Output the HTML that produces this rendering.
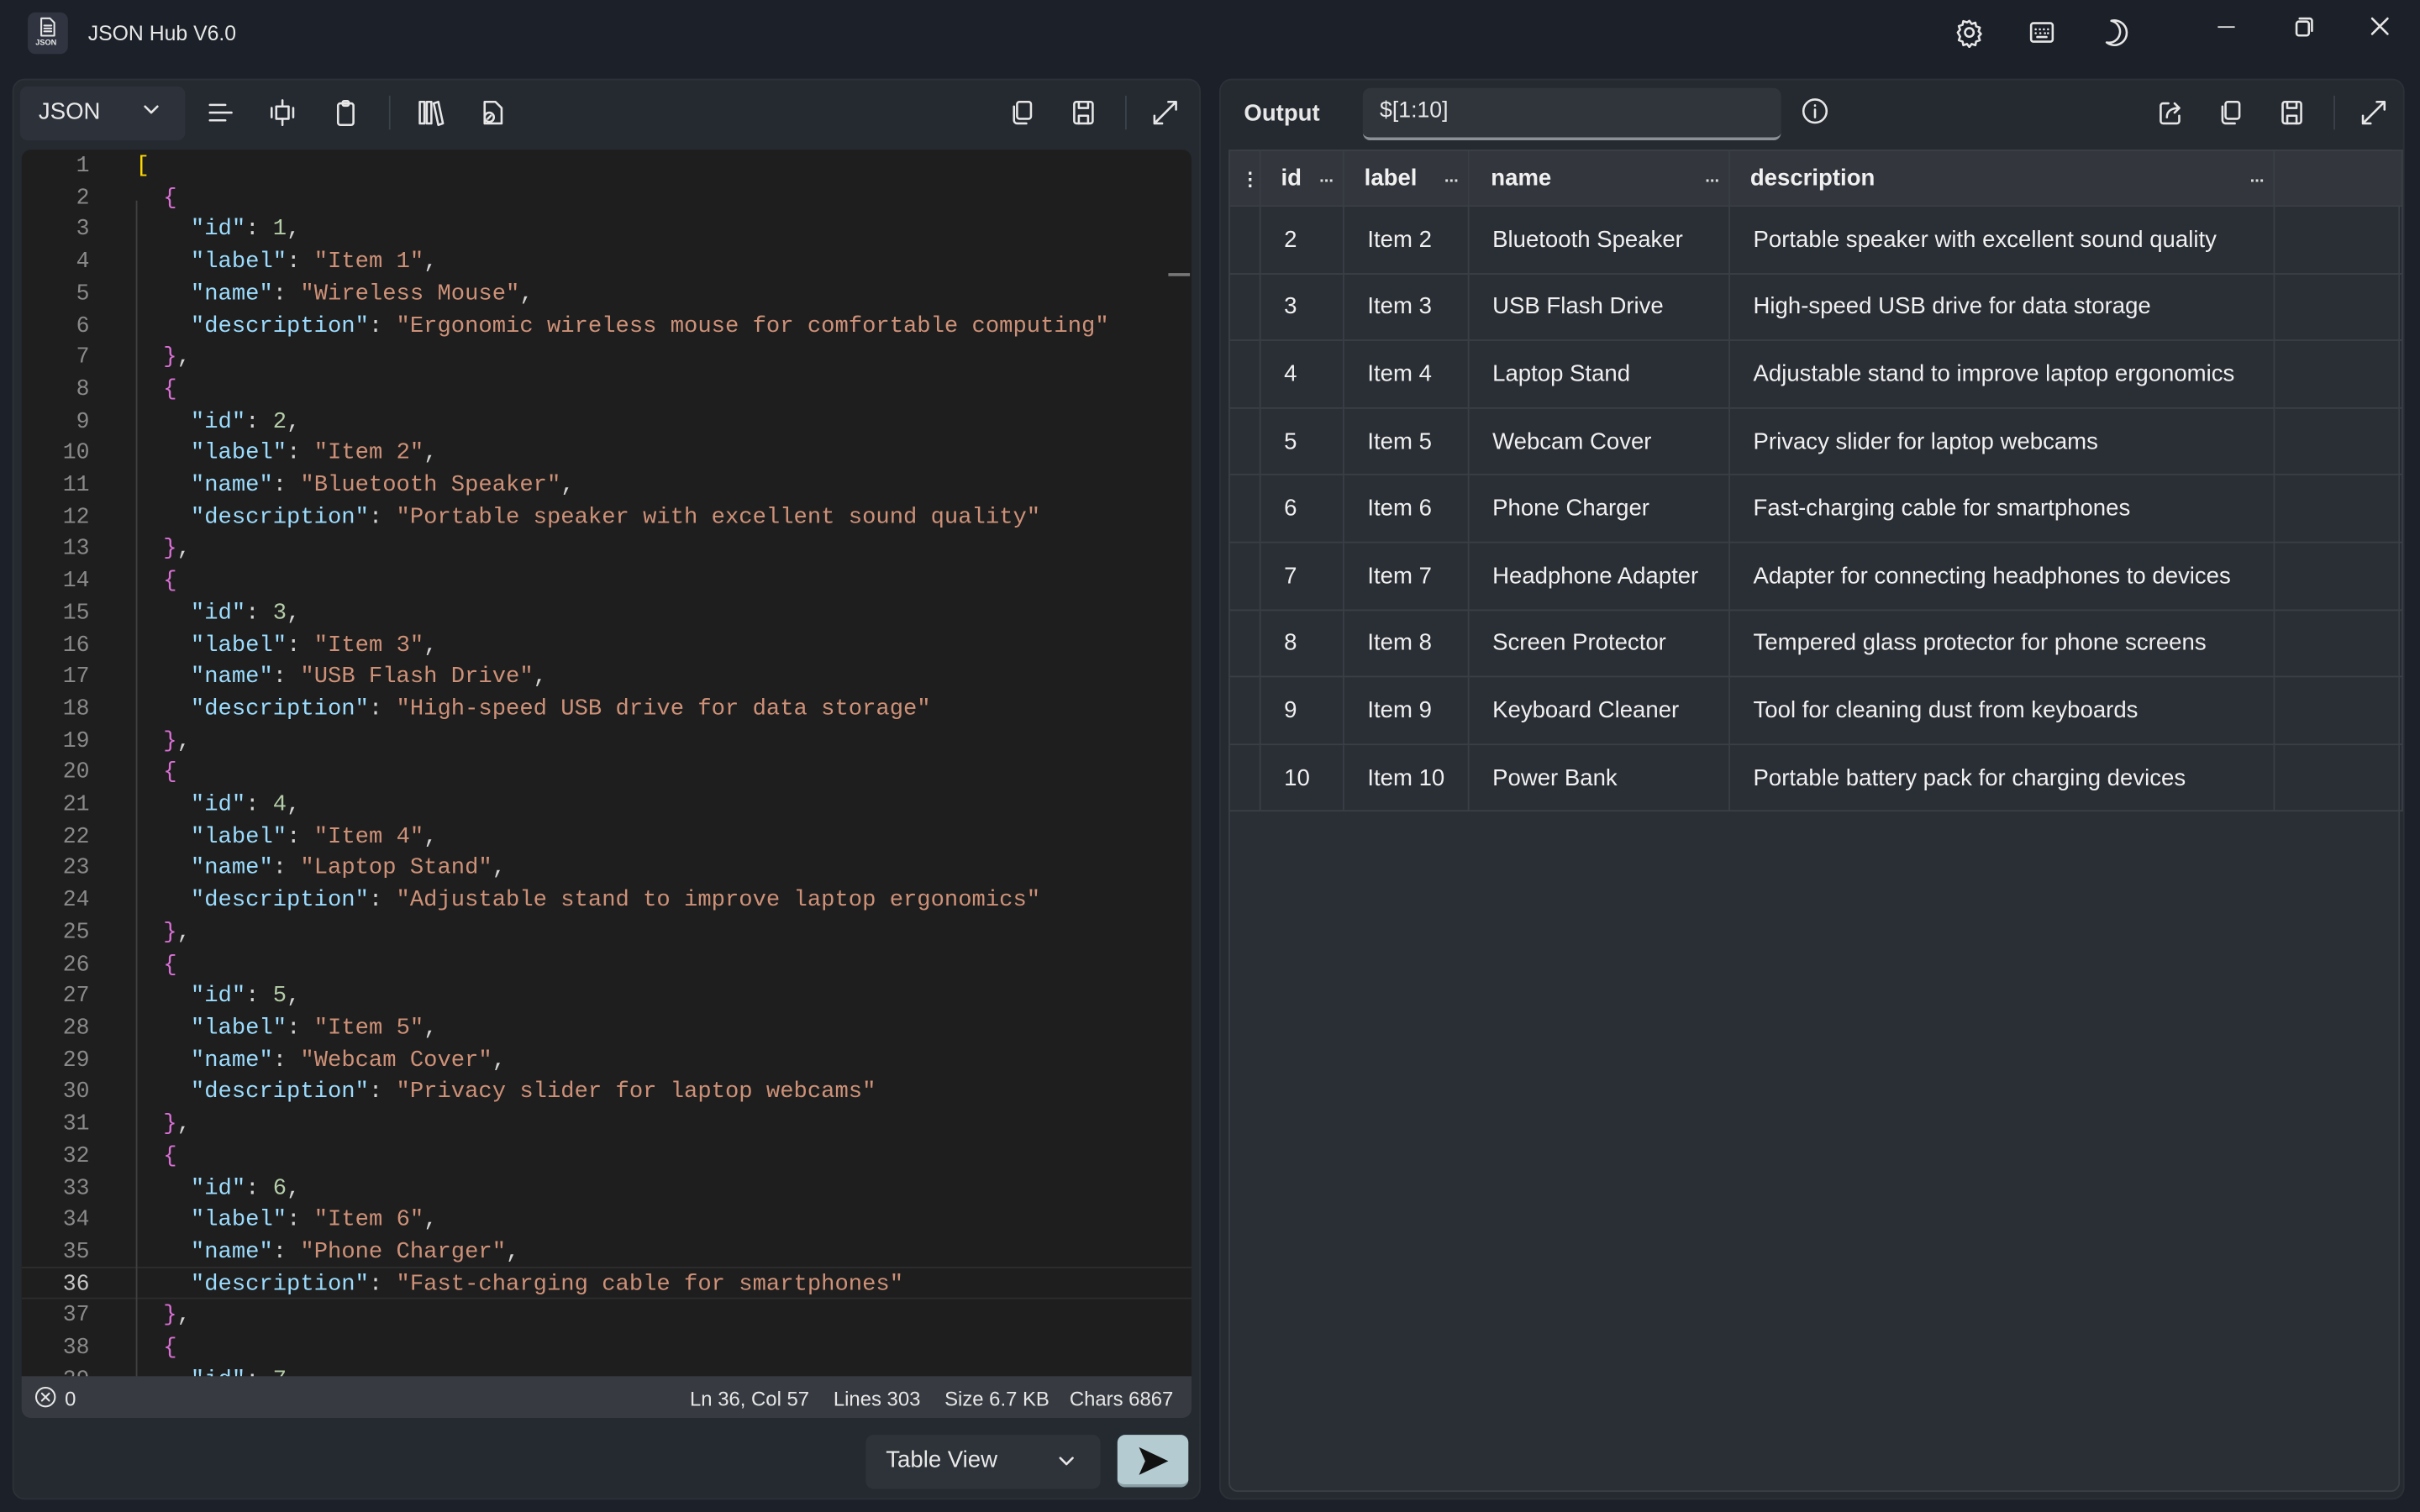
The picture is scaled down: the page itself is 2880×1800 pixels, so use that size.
<!DOCTYPE html>
<html><head><meta charset="utf-8">
<style>
*{box-sizing:border-box;margin:0;padding:0}
html,body{width:2880px;height:1800px;overflow:hidden;background:#1c2129}
#st{position:absolute;left:0;top:0;width:1568px;height:980px;transform:scale(1.836735);transform-origin:0 0;background:#1c2129;font-family:"Liberation Sans",sans-serif;color:#e8e8e8}
.a{position:absolute}
.ic{position:absolute;width:20px;height:20px;stroke:#e6e6e6;fill:none;stroke-width:1.4;stroke-linecap:round;stroke-linejoin:round}
.panel{position:absolute;background:#252a31;border-radius:8px;border:1px solid #2c3138}
#ed{position:absolute;left:14px;top:97px;width:758px;height:795px;background:#1e1e1e;border-radius:6px 6px 0 0;overflow:hidden}
.ln{position:absolute;left:0;width:44px;text-align:right;font-family:"Liberation Mono",monospace;font-size:14.4px;color:#8a8a8a;line-height:20.7px}
.cd{position:absolute;left:74px;font-family:"Liberation Mono",monospace;font-size:14.8px;color:#d4d4d4;line-height:20.7px;white-space:pre}
.k{color:#9cdcfe}.s{color:#ce9178}.n{color:#b5cea8}.p{color:#da70d6}.y{color:#ffd700}
table{border-collapse:collapse;position:absolute;left:796px;top:97px;font-size:15px;color:#f0f0f0}
td,th{border:1px solid #3a3f46;height:43.6px;padding:0 0 0 15px;text-align:left;white-space:nowrap}
th{height:36px;background:#33373d;font-weight:bold;font-size:15px;position:relative}
th .d{position:absolute;right:6px;top:11px;font-size:11px;color:#ddd}
</style></head><body><div id="st">
<!-- title bar -->
<div class="a" style="left:18px;top:8px;width:26px;height:27px;background:#2f3440;border-radius:5px"></div>
<svg class="ic" style="left:23px;top:10px;width:15px;height:15px;stroke-width:1.2" viewBox="0 0 16 16"><path d="M4 2h6l3 3v9H4z M6 7h5 M6 9h5 M6 11h5"/></svg>
<div class="a" style="left:23px;top:25px;font-size:5px;font-weight:bold">JSON</div>
<div class="a" style="left:57px;top:14px;font-size:13.5px;color:#e6e6e6">JSON Hub V6.0</div>
<svg class="ic" style="left:1266px;top:11px" viewBox="0 0 20 20"><circle cx="10" cy="10" r="2.8"/><path d="M10 2.5l1.5 2 2.4-.8.5 2.4 2.4.8-.8 2.4 1.5 1.7-1.5 1.7.8 2.4-2.4.8-.5 2.4-2.4-.8-1.5 2-1.5-2-2.4.8-.5-2.4-2.4-.8.8-2.4L2.5 10 4 8.3l-.8-2.4 2.4-.8.5-2.4 2.4.8z"/></svg>
<svg class="ic" style="left:1313px;top:11px" viewBox="0 0 20 20"><rect x="3" y="4" width="14" height="12" rx="1.5"/><path d="M6 8h0M8.7 8h0M11.3 8h0M14 8h0M6 10.5h0M9 10.5h0M12 10.5h0M14 10.5h0M7 13h6"/></svg>
<svg class="ic" style="left:1360px;top:11px" viewBox="0 0 20 20"><path d="M8 2.5a8 8 0 1 1-3 14 7 7 0 0 0 3-14z"/></svg>
<div class="a" style="left:1437px;top:17px;width:11px;height:1.3px;background:#ddd"></div>
<svg class="ic" style="left:1482px;top:7px" viewBox="0 0 20 20"><rect x="6" y="7" width="8" height="9" rx="1.5"/><path d="M8 5h6.5a1.5 1.5 0 0 1 1.5 1.5V13"/></svg>
<svg class="ic" style="left:1532px;top:7px" viewBox="0 0 20 20"><path d="M5 5l10 10M15 5L5 15"/></svg>

<!-- left panel -->
<div class="panel" style="left:8px;top:51px;width:770px;height:921px"></div>
<div class="a" style="left:13px;top:56px;width:107px;height:35px;background:#2d323a;border-radius:5px"></div>
<div class="a" style="left:25px;top:64px;font-size:15px">JSON</div>
<svg class="ic" style="left:90px;top:63px;width:16px;height:16px" viewBox="0 0 16 16"><path d="M4 6l4 4 4-4"/></svg>
<svg class="ic" style="left:133px;top:63px" viewBox="0 0 20 20"><path d="M3 5h10M3 10h14M3 15h10"/></svg>
<svg class="ic" style="left:173px;top:63px" viewBox="0 0 20 20"><rect x="6" y="6" width="8" height="8"/><path d="M10 2v4M10 14v4M3 7v6M17 7v6"/></svg>
<svg class="ic" style="left:214px;top:63px" viewBox="0 0 20 20"><rect x="5" y="4" width="10" height="14" rx="1.5"/><rect x="8" y="2.5" width="4" height="3" rx="1"/></svg>
<div class="a" style="left:252px;top:62px;width:1px;height:22px;background:#3c424a"></div>
<svg class="ic" style="left:269px;top:63px" viewBox="0 0 20 20"><rect x="3" y="3" width="3" height="14"/><rect x="7.5" y="3" width="3" height="14"/><path d="M12 4l3-1 3 14-3 1z"/></svg>
<svg class="ic" style="left:309px;top:63px" viewBox="0 0 20 20"><path d="M5 17V3h7l4 4v10z"/><circle cx="8" cy="13" r="3"/><path d="M7 14l2-2"/></svg>
<svg class="ic" style="left:652px;top:63px" viewBox="0 0 20 20"><rect x="7" y="3" width="9" height="11" rx="1.5"/><path d="M5 6v9a2 2 0 0 0 2 2h6"/></svg>
<svg class="ic" style="left:692px;top:63px" viewBox="0 0 20 20"><rect x="4" y="3" width="12" height="14" rx="1.5"/><path d="M7 3v4h6V3M7 17v-5h6v5"/></svg>
<div class="a" style="left:729px;top:62px;width:1px;height:22px;background:#3c424a"></div>
<svg class="ic" style="left:745px;top:63px" viewBox="0 0 20 20"><path d="M12 3h5v5M17 3L9 11M3 12v5h5M3 17l6-6"/></svg>

<div id="ed">
<div class="a" style="left:0;top:724px;width:758px;height:21px;border-top:1px solid #2d2d2d;border-bottom:1px solid #2d2d2d;background:#1e1e1e"></div>
<div class="a" style="left:74px;top:33px;width:1px;height:770px;background:#404040"></div>
<div class="a" style="left:743px;top:80px;width:14px;height:2px;background:#777"></div>
<div class="ln" style="top:1px">1<br>2<br>3<br>4<br>5<br>6<br>7<br>8<br>9<br>10<br>11<br>12<br>13<br>14<br>15<br>16<br>17<br>18<br>19<br>20<br>21<br>22<br>23<br>24<br>25<br>26<br>27<br>28<br>29<br>30<br>31<br>32<br>33<br>34<br>35<br><span style="color:#c6c6c6">36</span><br>37<br>38<br>39</div>
<div class="cd" style="top:1px"><span class="y">[</span>
  <span class="p">{</span>
    <span class="k">"id"</span>: <span class="n">1</span>,
    <span class="k">"label"</span>: <span class="s">"Item 1"</span>,
    <span class="k">"name"</span>: <span class="s">"Wireless Mouse"</span>,
    <span class="k">"description"</span>: <span class="s">"Ergonomic wireless mouse for comfortable computing"</span>
  <span class="p">}</span>,
  <span class="p">{</span>
    <span class="k">"id"</span>: <span class="n">2</span>,
    <span class="k">"label"</span>: <span class="s">"Item 2"</span>,
    <span class="k">"name"</span>: <span class="s">"Bluetooth Speaker"</span>,
    <span class="k">"description"</span>: <span class="s">"Portable speaker with excellent sound quality"</span>
  <span class="p">}</span>,
  <span class="p">{</span>
    <span class="k">"id"</span>: <span class="n">3</span>,
    <span class="k">"label"</span>: <span class="s">"Item 3"</span>,
    <span class="k">"name"</span>: <span class="s">"USB Flash Drive"</span>,
    <span class="k">"description"</span>: <span class="s">"High-speed USB drive for data storage"</span>
  <span class="p">}</span>,
  <span class="p">{</span>
    <span class="k">"id"</span>: <span class="n">4</span>,
    <span class="k">"label"</span>: <span class="s">"Item 4"</span>,
    <span class="k">"name"</span>: <span class="s">"Laptop Stand"</span>,
    <span class="k">"description"</span>: <span class="s">"Adjustable stand to improve laptop ergonomics"</span>
  <span class="p">}</span>,
  <span class="p">{</span>
    <span class="k">"id"</span>: <span class="n">5</span>,
    <span class="k">"label"</span>: <span class="s">"Item 5"</span>,
    <span class="k">"name"</span>: <span class="s">"Webcam Cover"</span>,
    <span class="k">"description"</span>: <span class="s">"Privacy slider for laptop webcams"</span>
  <span class="p">}</span>,
  <span class="p">{</span>
    <span class="k">"id"</span>: <span class="n">6</span>,
    <span class="k">"label"</span>: <span class="s">"Item 6"</span>,
    <span class="k">"name"</span>: <span class="s">"Phone Charger"</span>,
    <span class="k">"description"</span>: <span class="s">"Fast-charging cable for smartphones"</span>
  <span class="p">}</span>,
  <span class="p">{</span>
    <span class="k">"id"</span>: <span class="n">7</span>,</div>
</div>
<div class="a" style="left:14px;top:892px;width:758px;height:27px;background:#373b41;border-radius:0 0 6px 6px;font-size:13px;color:#e6e6e6">
<svg class="ic" style="left:8px;top:6px;width:15px;height:15px;stroke-width:1.2" viewBox="0 0 16 16"><circle cx="8" cy="8" r="6.5"/><path d="M5.5 5.5l5 5M10.5 5.5l-5 5"/></svg>
<span class="a" style="left:28px;top:7px">0</span>
<span class="a" style="left:433px;top:7px;word-spacing:0">Ln 36, Col 57</span>
<span class="a" style="left:526px;top:7px">Lines 303</span>
<span class="a" style="left:598px;top:7px">Size 6.7 KB</span>
<span class="a" style="left:679px;top:7px">Chars 6867</span>
</div>
<div class="a" style="left:561px;top:930px;width:152px;height:35px;background:#2e333a;border-radius:5px"></div>
<div class="a" style="left:574px;top:938px;font-size:15px">Table View</div>
<svg class="ic" style="left:683px;top:939px;width:16px;height:16px" viewBox="0 0 16 16"><path d="M4 6l4 4 4-4"/></svg>
<div class="a" style="left:724px;top:930px;width:46px;height:34px;background:#b4cbd2;border-radius:5px;border-bottom:2px solid #8aa0a6"></div>
<svg class="a" style="left:736px;top:936px" width="22" height="22" viewBox="0 0 22 22"><path d="M2 2l19 9-19 9 4-9z" fill="#111"/></svg>

<!-- right panel -->
<div class="panel" style="left:790px;top:51px;width:768px;height:921px"></div>
<div class="a" style="left:806px;top:65px;font-size:15px;font-weight:bold">Output</div>
<div class="a" style="left:883px;top:57px;width:271px;height:34px;background:#30353c;border-radius:5px;border-bottom:2px solid #8a9096"></div>
<div class="a" style="left:894px;top:64px;font-size:14.5px">$[1:10]</div>
<svg class="ic" style="left:1166px;top:62px" viewBox="0 0 20 20"><circle cx="10" cy="10" r="7.5"/><path d="M10 9v5M10 6.3v.2"/></svg>
<svg class="ic" style="left:1396px;top:63px" viewBox="0 0 20 20"><path d="M9 4H5.5A1.5 1.5 0 0 0 4 5.5v10A1.5 1.5 0 0 0 5.5 17h9a1.5 1.5 0 0 0 1.5-1.5V12"/><path d="M8 13c0-4 3-6 8-6M13 4l3 3-3 3"/></svg>
<svg class="ic" style="left:1435px;top:63px" viewBox="0 0 20 20"><rect x="7" y="3" width="9" height="11" rx="1.5"/><path d="M5 6v9a2 2 0 0 0 2 2h6"/></svg>
<svg class="ic" style="left:1475px;top:63px" viewBox="0 0 20 20"><rect x="4" y="3" width="12" height="14" rx="1.5"/><path d="M7 3v4h6V3M7 17v-5h6v5"/></svg>
<div class="a" style="left:1512px;top:62px;width:1px;height:22px;background:#3c424a"></div>
<svg class="ic" style="left:1528px;top:63px" viewBox="0 0 20 20"><path d="M12 3h5v5M17 3L9 11M3 12v5h5M3 17l6-6"/></svg>

<div class="a" style="left:796px;top:97px;width:759px;height:870px;background:#2a2e35;border:1px solid #3a3f46;border-radius:6px"></div>
<table>
<tr><th style="width:19px;padding:0 0 0 7px;font-size:12px">⋮</th><th style="width:54px;padding-left:13px">id<span class="d">...</span></th><th style="width:81px;padding-left:13px">label<span class="d">...</span></th><th style="width:169px;padding-left:14px">name<span class="d">...</span></th><th style="width:353px;padding-left:13px">description<span class="d">...</span></th><th style="width:83px"></th></tr>
<tr><td></td><td>2</td><td>Item 2</td><td>Bluetooth Speaker</td><td>Portable speaker with excellent sound quality</td><td></td></tr>
<tr><td></td><td>3</td><td>Item 3</td><td>USB Flash Drive</td><td>High-speed USB drive for data storage</td><td></td></tr>
<tr><td></td><td>4</td><td>Item 4</td><td>Laptop Stand</td><td>Adjustable stand to improve laptop ergonomics</td><td></td></tr>
<tr><td></td><td>5</td><td>Item 5</td><td>Webcam Cover</td><td>Privacy slider for laptop webcams</td><td></td></tr>
<tr><td></td><td>6</td><td>Item 6</td><td>Phone Charger</td><td>Fast-charging cable for smartphones</td><td></td></tr>
<tr><td></td><td>7</td><td>Item 7</td><td>Headphone Adapter</td><td>Adapter for connecting headphones to devices</td><td></td></tr>
<tr><td></td><td>8</td><td>Item 8</td><td>Screen Protector</td><td>Tempered glass protector for phone screens</td><td></td></tr>
<tr><td></td><td>9</td><td>Item 9</td><td>Keyboard Cleaner</td><td>Tool for cleaning dust from keyboards</td><td></td></tr>
<tr><td></td><td>10</td><td>Item 10</td><td>Power Bank</td><td>Portable battery pack for charging devices</td><td></td></tr>
</table>
</div></body></html>
